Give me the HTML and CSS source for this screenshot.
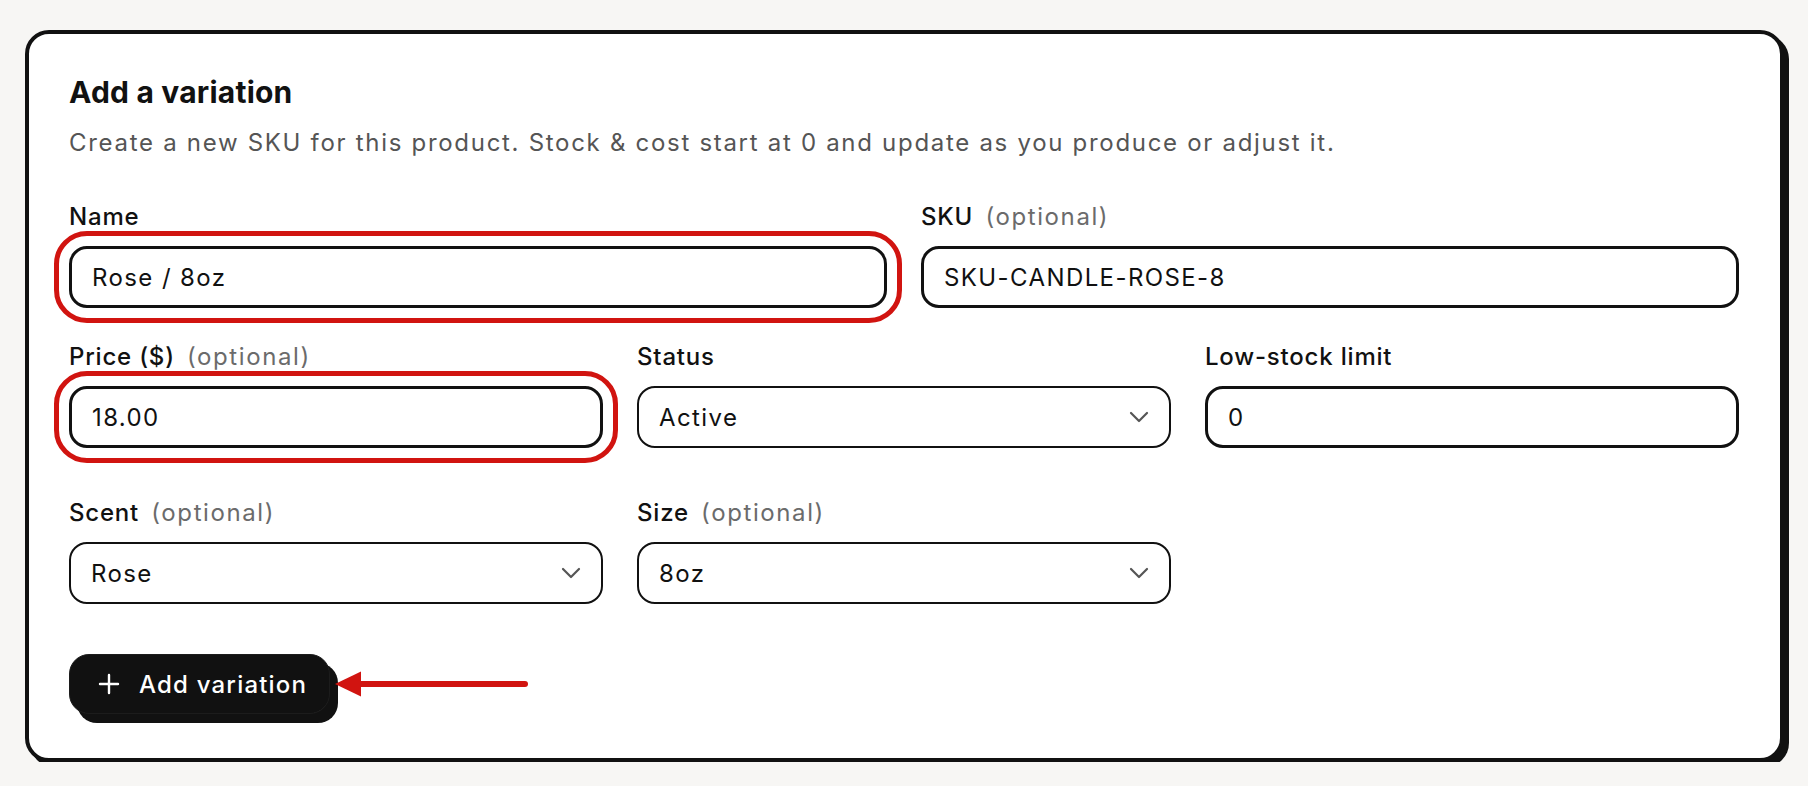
FILE: index.html
```html
<!DOCTYPE html>
<html lang="en">
<head>
    <meta charset="UTF-8">
    <title>Add a variation</title>
    <link rel="stylesheet" href="styles.css">
</head>
<body>
    <div class="card">
        <h2 class="title">Add a variation</h2>
        <p class="subtitle">Create a new SKU for this product. Stock &amp; cost start at 0 and update as you produce or adjust it.</p>

        <div class="row row-2">
            <div class="field">
                <label>Name</label>
                <input type="text" class="text-input marked" value="Rose / 8oz">
            </div>
            <div class="field">
                <label>SKU <span class="optional">(optional)</span></label>
                <input type="text" class="text-input" value="SKU-CANDLE-ROSE-8">
            </div>
        </div>

        <div class="row row-3">
            <div class="field">
                <label>Price ($) <span class="optional">(optional)</span></label>
                <input type="text" class="text-input marked" value="18.00">
            </div>
            <div class="field">
                <label>Status</label>
                <div class="select-wrap">
                    <select class="select-input">
                        <option>Active</option>
                        <option>Draft</option>
                        <option>Archived</option>
                    </select>
                    <svg class="chevron" width="20" height="12" viewBox="0 0 20 12"><path d="M2 2l8 8 8-8" fill="none" stroke="#555" stroke-width="2.2" stroke-linecap="round" stroke-linejoin="round"/></svg>
                </div>
            </div>
            <div class="field">
                <label>Low-stock limit</label>
                <input type="text" class="text-input" value="0">
            </div>
        </div>

        <div class="row row-3 attrs">
            <div class="field">
                <label>Scent <span class="optional">(optional)</span></label>
                <div class="select-wrap">
                    <select class="select-input">
                        <option>Rose</option>
                        <option>Lavender</option>
                        <option>Vanilla</option>
                    </select>
                    <svg class="chevron" width="20" height="12" viewBox="0 0 20 12"><path d="M2 2l8 8 8-8" fill="none" stroke="#555" stroke-width="2.2" stroke-linecap="round" stroke-linejoin="round"/></svg>
                </div>
            </div>
            <div class="field">
                <label>Size <span class="optional">(optional)</span></label>
                <div class="select-wrap">
                    <select class="select-input">
                        <option>8oz</option>
                        <option>12oz</option>
                        <option>16oz</option>
                    </select>
                    <svg class="chevron" width="20" height="12" viewBox="0 0 20 12"><path d="M2 2l8 8 8-8" fill="none" stroke="#555" stroke-width="2.2" stroke-linecap="round" stroke-linejoin="round"/></svg>
                </div>
            </div>
        </div>

        <div class="actions">
            <button class="btn-add">
                <svg width="22" height="22" viewBox="0 0 22 22"><path d="M11 2v18M2 11h18" stroke="#fff" stroke-width="2.4" stroke-linecap="round"/></svg>
                Add variation
            </button>
            <svg class="pointer" width="200" height="30" viewBox="0 0 200 30"><path d="M28 15H194" stroke="#d11410" stroke-width="6" stroke-linecap="round"/><path d="M4 15L30 2.5V27.5Z" fill="#d11410"/></svg>
        </div>
    </div>
</body>
</html>
```

FILE: styles.css
```css
body {
    margin: 0;
    padding: 30px 24px 0 25px;
    background-color: #f7f6f4;
    font-family: Inter, "Noto Sans", sans-serif;
    color: #111;
}
.card {
    background-color: #fff;
    border: 4px solid #111;
    border-radius: 24px;
    box-shadow: 5px 5px 0 #111;
    padding: 40px 41px 44px 40px;
}
.title {
    margin: 0;
    font-size: 30px;
    line-height: 36px;
    font-weight: 700;
    letter-spacing: 0.2px;
}
.subtitle {
    margin: 17px 0 42px;
    font-size: 24px;
    line-height: 32px;
    color: #555;
    letter-spacing: 1.7px;
}
.row {
    display: grid;
    gap: 34px;
    margin-bottom: 33px;
}
.row-2 {
    grid-template-columns: 1fr 1fr;
}
.row-3 {
    grid-template-columns: 1fr 1fr 1fr;
}
.attrs {
    margin-top: 49px;
    margin-bottom: 0;
}
.field label {
    display: block;
    font-size: 24px;
    line-height: 32px;
    font-weight: 500;
    letter-spacing: 0.8px;
    margin-bottom: 13px;
}
.optional {
    font-weight: 400;
    color: #6b6b6b;
    letter-spacing: 1.6px;
    margin-left: 5px;
}
.text-input, .select-input {
    display: block;
    width: 100%;
    height: 62px;
    box-sizing: border-box;
    padding: 0 20px;
    font-family: inherit;
    font-size: 24px;
    letter-spacing: 1.4px;
    color: #111;
    background-color: #fff;
    border-radius: 18px;
}
.text-input {
    border: 3px solid #111;
}
.select-input {
    border: 2px solid #111;
    appearance: none;
    -webkit-appearance: none;
}
.marked {
    outline: 5px solid #d11410;
    outline-offset: 10px;
}
.select-wrap {
    position: relative;
}
.chevron {
    position: absolute;
    right: 22px;
    top: 25px;
    pointer-events: none;
}
.actions {
    display: flex;
    align-items: center;
    margin-top: 50px;
}
.btn-add {
    display: flex;
    align-items: center;
    gap: 19px;
    height: 60px;
    padding: 0 22px 0 28px;
    background-color: #111;
    color: #fff;
    border: 1px solid #1c1c1c;
    border-radius: 20px;
    box-shadow: 8px 9px 0 #111;
    font-family: inherit;
    font-size: 24px;
    font-weight: 500;
    letter-spacing: 1.2px;
    cursor: pointer;
}
.pointer {
    display: block;
    margin-left: 1px;
}
```
